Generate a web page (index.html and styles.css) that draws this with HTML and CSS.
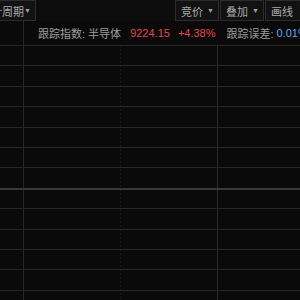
FILE: index.html
```html
<!DOCTYPE html>
<html lang="zh">
<head>
  <meta charset="UTF-8">
  <title>行情</title>
  <link rel="stylesheet" href="styles.css">
</head>
<body>
  <div class="toolbar">
    <div class="tb-btn tb-first"><span class="dash"></span>周期<span class="arrow">▼</span></div>
    <div class="tb-btn tb-bid">竞价<span class="arrow">▼</span></div>
    <div class="tb-btn">叠加<span class="arrow">▼</span></div>
    <div class="tb-btn">画线</div>
  </div>

  <div class="main">
    <!-- 跟踪信息 -->
    <div class="info">
      <span class="label">跟踪指数: 半导体</span>
      <span class="red price">9224.15</span>
      <span class="red pct">+4.38%</span>
      <span class="label err">跟踪误差:</span>
      <span class="blue">0.01%</span>
    </div>

    <!-- 图表网格 -->
    <div class="chart">
      <div class="row"></div>
      <div class="row"></div>
      <div class="row"></div>
      <div class="row"></div>
      <div class="row"></div>
      <div class="row"></div>
      <div class="row"></div>
      <div class="row mid"></div>
      <div class="row"></div>
      <div class="row"></div>
      <div class="row"></div>
      <div class="row"></div>
      <div class="row"></div>
    </div>
  </div>
</body>
</html>
```

FILE: styles.css
```css
body {
  margin: 0;
  width: 300px;
  height: 300px;
  overflow: hidden;
  background-color: #0a0a0a;
  font-family: "Liberation Sans", "Noto Sans CJK SC", sans-serif;
  font-size: 11px;
}

.toolbar {
  display: flex;
  height: 21px;
  background-color: #0c0c0c;
  overflow: hidden;
  white-space: nowrap;
}

.tb-btn {
  flex-shrink: 0;
  display: flex;
  align-items: center;
  box-sizing: border-box;
  width: 44px;
  height: 21px;
  padding: 0 4px 0 5px;
  margin-right: 1px;
  border: 1px solid #2c2c2c;
  background-color: #121212;
  color: #a9a9a9;
}

.tb-first {
  width: 37px;
  margin-left: -1px;
  padding-left: 0;
}

.tb-bid {
  margin-left: 138px;
}

.dash {
  display: inline-block;
  width: 3px;
  height: 1px;
  margin-right: 0;
  background-color: #777;
}

.arrow {
  margin-left: auto;
  font-size: 7px;
  color: #a0a0a0;
}

.main {
  background:
    linear-gradient(#262626, #262626) 23px 0 / 1px 100% no-repeat;
}

.info {
  display: flex;
  align-items: center;
  height: 24px;
  padding-left: 38px;
  white-space: nowrap;
  overflow: hidden;
}

.label {
  color: #9c9c9c;
}

.red {
  color: #e2474a;
}

.blue {
  color: #5aa8ec;
  margin-left: 3px;
}

.price {
  margin-left: 9px;
}

.pct {
  margin-left: 8px;
}

.err {
  margin-left: 11px;
}

.chart {
  display: flex;
  flex-direction: column;
  height: 255px;
  background:
    linear-gradient(#2a2a2a, #2a2a2a) 217px 0 / 1px 100% no-repeat,
    repeating-linear-gradient(#1a1a1a 0 2px, transparent 2px 4px) 120px 0 / 1px 100% no-repeat;
}

.row {
  flex-shrink: 0;
  box-sizing: border-box;
  height: 20.42px;
  border-top: 1px solid #282828;
}

.row.mid {
  border-top: 2px solid #383838;
}
```
